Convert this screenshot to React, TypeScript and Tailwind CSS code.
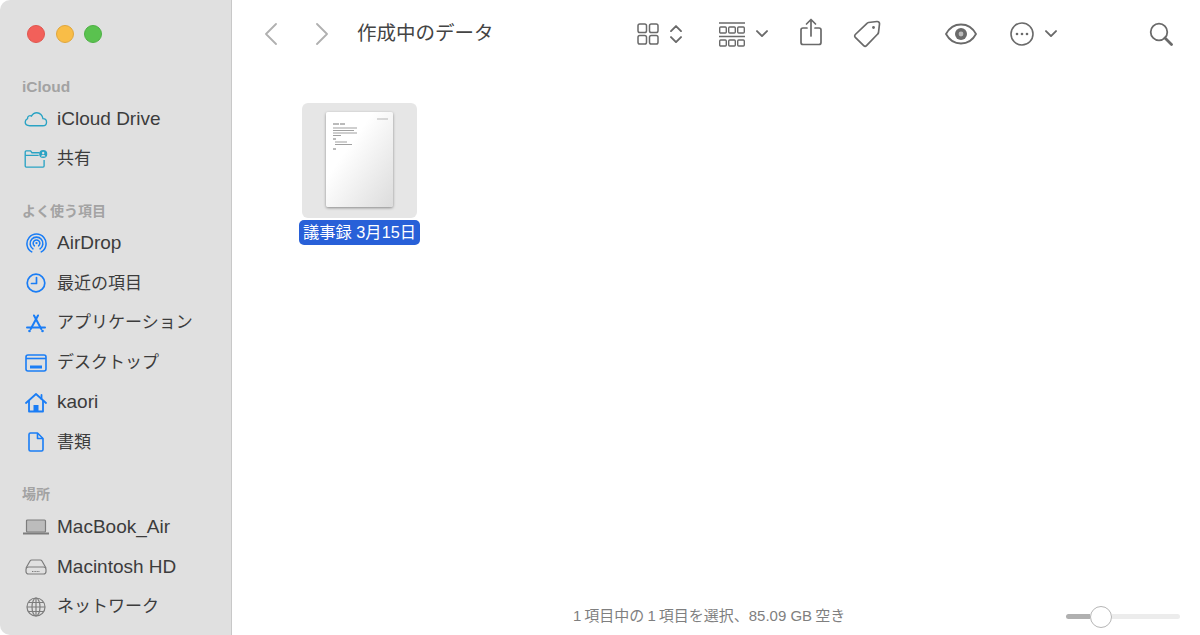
import React from 'react';

const blue = '#1a7df5';
const teal = '#2aa3c4';
const gray = '#7c7c7c';
const tool = '#6a6a6a';

type IconProps = { color?: string };

const CloudIcon = ({ color = teal }: IconProps) => (
  <svg width="24" height="18" viewBox="0 0 26 20" fill="none" stroke={color} strokeWidth="1.500">
    <path d="M6 17.500h14.500c2.600 0 4.200-1.800 4.200-4 0-2.300-1.800-3.900-4-3.900-.4-3.600-3.200-6.600-6.800-6.600-2.800 0-4.800 1.500-6 3.800-.9-.6-2-.6-2.900-.1-1 .6-1.500 1.600-1.400 2.800C1.900 10.300 1 11.800 1 13.400c0 2.300 2 4.100 5 4.100z" />
  </svg>
);

const SharedFolderIcon = ({ color = teal }: IconProps) => (
  <svg width="24" height="18" viewBox="0 0 26 20" fill="none" stroke={color} strokeWidth="1.500">
    <path d="M17 3H8.500L7 1H2.200C1.500 1 1 1.500 1 2.200v15.600c0 .7.500 1.200 1.200 1.200h18.600c.7 0 1.200-.5 1.200-1.200V11" />
    <path d="M1 6h15" />
    <circle cx="21" cy="4.500" r="4.500" fill={color} stroke="none" />
    <circle cx="21" cy="3.200" r="1.300" fill="#e0e0e0" stroke="none" />
    <path d="M18.500 7.300c.4-1.500 1.300-2 2.500-2s2.100.5 2.500 2z" fill="#e0e0e0" stroke="none" />
  </svg>
);

const AirDropIcon = ({ color = blue }: IconProps) => (
  <svg width="21" height="21" viewBox="0 0 22 22" fill="none" stroke={color} strokeWidth="1.600" strokeLinecap="round">
    <path d="M6 19.800a10 10 0 1 1 10 0" />
    <path d="M7.300 16.600a6.700 6.700 0 1 1 7.400 0" />
    <path d="M8.800 13.500a3.500 3.500 0 1 1 4.400 0" />
    <circle cx="11" cy="10.500" r="1.200" fill={color} stroke="none" />
  </svg>
);

const ClockIcon = ({ color = blue }: IconProps) => (
  <svg width="20" height="20" viewBox="0 0 20 20" fill="none" stroke={color} strokeWidth="1.700" strokeLinecap="round" strokeLinejoin="round">
    <circle cx="10" cy="10" r="8.800" />
    <path d="M10.500 4.500v6H5.500" />
  </svg>
);

const AppsIcon = ({ color = blue }: IconProps) => (
  <svg width="20" height="19" viewBox="0 0 20 19" fill="none" stroke={color} strokeWidth="2" strokeLinecap="round">
    <path d="M8 1.500 15.300 15" />
    <path d="M12 1.500 4.700 15" />
    <path d="M1 13.500h18" />
    <circle cx="3.500" cy="17" r="1.300" fill={color} stroke="none" />
    <circle cx="16.500" cy="17" r="1.300" fill={color} stroke="none" />
  </svg>
);

const DesktopIcon = ({ color = blue }: IconProps) => (
  <svg width="22" height="18" viewBox="0 0 22 18" fill="none" stroke={color} strokeWidth="1.600">
    <rect x="1" y="1" width="20" height="16" rx="2" />
    <path d="M1 4.500h20" />
    <rect x="5" y="11.500" width="12" height="3" fill={color} stroke="none" />
  </svg>
);

const HomeIcon = ({ color = blue }: IconProps) => (
  <svg width="22" height="20" viewBox="0 0 22 20" fill="none" stroke={color} strokeWidth="1.800" strokeLinecap="round" strokeLinejoin="round">
    <path d="M1 10 11 1l10 9" />
    <path d="M4 8v10.500h14V8" />
    <path d="M16.500 2v4" />
    <rect x="8.500" y="12" width="5" height="6.500" fill={color} stroke="none" />
  </svg>
);

const DocIcon = ({ color = blue }: IconProps) => (
  <svg width="16" height="20" viewBox="0 0 16 20" fill="none" stroke={color} strokeWidth="1.600" strokeLinejoin="round">
    <path d="M2.500 1H9.500L15 6.500V17.500C15 18.300 14.300 19 13.500 19H2.500C1.700 19 1 18.300 1 17.500V2.500C1 1.700 1.700 1 2.500 1Z" />
    <path d="M9.500 1V6.500H15" />
  </svg>
);

const LaptopIcon = ({ color = gray }: IconProps) => (
  <svg width="26" height="16" viewBox="0 0 26 16" fill="none">
    <rect x="3.500" y="1" width="19" height="12" rx="1" fill="#bcbcbc" stroke={color} strokeWidth="1.200" />
    <path d="M0 14.500h26" stroke={color} strokeWidth="1.800" />
  </svg>
);

const DriveIcon = ({ color = gray }: IconProps) => (
  <svg width="22" height="16" viewBox="0 0 22 16" fill="none" stroke={color} strokeWidth="1.200" strokeLinejoin="round">
    <path d="M1 9 5 2c.4-.7 1-1 1.800-1h8.400c.8 0 1.400.3 1.800 1l4 7" />
    <rect x="1" y="8" width="20" height="7" rx="2.500" />
    <path d="M7 12.500h8" strokeDasharray="1 .6" />
  </svg>
);

const GlobeIcon = ({ color = gray }: IconProps) => (
  <svg width="20" height="20" viewBox="0 0 20 20" fill="none" stroke={color} strokeWidth="1.200">
    <circle cx="10" cy="10" r="9" />
    <ellipse cx="10" cy="10" rx="4" ry="9" />
    <path d="M10 1v18M1 10h18M2.500 5.500h15M2.500 14.500h15" />
  </svg>
);

const Chevron = ({ dir, color = tool, size = 12 }: { dir: 'up' | 'down'; color?: string; size?: number }) => (
  <svg width={size} height={size * 0.6} viewBox="0 0 12 7" fill="none" stroke={color} strokeWidth="1.900" strokeLinecap="round" strokeLinejoin="round">
    <path d={dir === 'down' ? 'M1 1l5 5 5-5' : 'M1 6l5-5 5 5'} />
  </svg>
);

const NavChevron = ({ flip }: { flip?: boolean }) => (
  <svg width="14" height="22" viewBox="0 0 14 22" fill="none" stroke="#b0b0b0" strokeWidth="1.800" strokeLinecap="round" strokeLinejoin="round">
    <path d={flip ? 'M2 1l10 10L2 21' : 'M12 1 2 11l10 10'} />
  </svg>
);

const GridIcon = () => (
  <svg width="22" height="22" viewBox="0 0 22 22" fill="none" stroke={tool} strokeWidth="1.500">
    <rect x="1" y="1" width="8.500" height="8.500" rx="1.800" />
    <rect x="12.500" y="1" width="8.500" height="8.500" rx="1.800" />
    <rect x="1" y="12.500" width="8.500" height="8.500" rx="1.800" />
    <rect x="12.500" y="12.500" width="8.500" height="8.500" rx="1.800" />
  </svg>
);

const GroupIcon = () => (
  <svg width="26" height="25" viewBox="0 0 26 25" fill="none" stroke={tool} strokeWidth="1.400">
    <path d="M0 1h26M0 14.500h26" strokeWidth="1.700" />
    <rect x=".7" y="5" width="6.600" height="6" rx="1" />
    <rect x="9.700" y="5" width="6.600" height="6" rx="1" />
    <rect x="18.700" y="5" width="6.600" height="6" rx="1" />
    <rect x=".7" y="18" width="6.600" height="6" rx="1" />
    <rect x="9.700" y="18" width="6.600" height="6" rx="1" />
    <rect x="18.700" y="18" width="6.600" height="6" rx="1" />
  </svg>
);

const ShareIcon = () => (
  <svg width="22" height="28" viewBox="0 0 22 28" fill="none" stroke={tool} strokeWidth="1.700" strokeLinecap="round" strokeLinejoin="round">
    <path d="M7 10H3c-1.100 0-2 .9-2 2v12.500c0 1.100.9 2 2 2h16c1.100 0 2-.9 2-2V12c0-1.100-.9-2-2-2h-4" />
    <path d="M11 18V1.500M6.500 6 11 1.500 15.500 6" />
  </svg>
);

const TagIcon = () => (
  <svg width="28" height="28" viewBox="0 0 28 28" fill="none" stroke={tool} strokeWidth="1.700" strokeLinejoin="round">
    <path d="M15.500 2.500 24 1.500c1.500-.1 2.600 1 2.500 2.500l-1 8.500c-.1.600-.3 1.100-.8 1.500L13.500 25.700c-.8.800-2 .8-2.800 0L2.300 17.300c-.8-.8-.8-2 0-2.800L14 3.300c.4-.5.900-.7 1.500-.8z" />
    <circle cx="20.500" cy="7.500" r="1.400" fill={tool} stroke="none" />
  </svg>
);

const EyeIcon = () => (
  <svg width="32" height="22" viewBox="0 0 32 22" fill="none" stroke={tool} strokeWidth="1.800">
    <path d="M1 11C4.500 4.500 10 1.500 16 1.500S27.500 4.500 31 11c-3.500 6.500-9 9.500-15 9.500S4.500 17.500 1 11z" />
    <circle cx="16" cy="11" r="6" fill={tool} stroke="none" />
    <circle cx="16" cy="11" r="2.400" fill="#bbb" stroke="none" />
  </svg>
);

const MoreIcon = () => (
  <svg width="24" height="24" viewBox="0 0 24 24" fill="none" stroke={tool} strokeWidth="1.600">
    <circle cx="12" cy="12" r="11" />
    <circle cx="7" cy="12" r="1.300" fill={tool} stroke="none" />
    <circle cx="12" cy="12" r="1.300" fill={tool} stroke="none" />
    <circle cx="17" cy="12" r="1.300" fill={tool} stroke="none" />
  </svg>
);

const SearchIcon = () => (
  <svg width="24" height="24" viewBox="0 0 24 24" fill="none" stroke={tool} strokeLinecap="round">
    <circle cx="10" cy="10" r="8.300" strokeWidth="1.800" />
    <path d="M16 16l6.500 6.500" strokeWidth="2.800" />
  </svg>
);

// latin labels sit a bit larger than the kana/kanji ones in the reference
const latin = 'text-[19px]';
const cjk = 'text-[17px]';

const sections = [
  {
    title: 'iCloud',
    className: 'mt-[32px] h-6 text-[15.500px]',
    items: [
      { label: 'iCloud Drive', size: latin, icon: <CloudIcon /> },
      { label: '共有', size: cjk, icon: <SharedFolderIcon /> },
    ],
  },
  {
    title: 'よく使う項目',
    className: 'mt-5 h-[25px] text-[14px]',
    items: [
      { label: 'AirDrop', size: latin, icon: <AirDropIcon /> },
      { label: '最近の項目', size: cjk, icon: <ClockIcon /> },
      { label: 'アプリケーション', size: cjk, icon: <AppsIcon /> },
      { label: 'デスクトップ', size: cjk, icon: <DesktopIcon /> },
      { label: 'kaori', size: latin, icon: <HomeIcon /> },
      { label: '書類', size: cjk, icon: <DocIcon /> },
    ],
  },
  {
    title: '場所',
    className: 'mt-[20px] h-[25px] text-[14px]',
    items: [
      { label: 'MacBook_Air', size: latin, icon: <LaptopIcon /> },
      { label: 'Macintosh HD', size: latin, icon: <DriveIcon /> },
      { label: 'ネットワーク', size: cjk, icon: <GlobeIcon /> },
    ],
  },
];

const DocThumb = () => (
  <div className="flex h-[115px] w-[115px] justify-center rounded-[6px] bg-[#e6e6e6] pt-[9px]">
    <div className="h-[95px] w-[67px] rounded-[2px] bg-gradient-to-br from-white from-35% to-[#dcdcdc] shadow-[0_1px_3px_rgba(0,0,0,0.4)]">
      <svg width="67" height="60" viewBox="0 0 67 60" fill="none" stroke="#777" strokeWidth="0.700">
        <path d="M7 12h6M14 12h5" strokeWidth="1" />
        <path d="M51 7h11" stroke="#999" />
        <path d="M7 16h24M7 18.500h21M7 21h24M7 23.500h8" />
        <path d="M7 27h3" strokeWidth="1" />
        <path d="M9 30h12M9 32.500h17" />
        <path d="M7 37h3" strokeWidth="1" />
      </svg>
    </div>
  </div>
);

export default function App() {
  return (
    <div className="flex h-[635px] w-[1200px] overflow-hidden rounded-[10px] bg-white font-['Liberation_Sans','Noto_Sans_CJK_JP',sans-serif]">
      <aside className="h-full w-[232px] shrink-0 border-r border-[#c8c8c8] bg-[#e0e0e0]">
        <div className="flex gap-[10.500px] pl-[27px] pt-[25px]">
          <span className="h-[18px] w-[18px] rounded-full border border-[#e0564f] bg-[#f2605a]" />
          <span className="h-[18px] w-[18px] rounded-full border border-[#e0a63c] bg-[#f9bd47]" />
          <span className="h-[18px] w-[18px] rounded-full border border-[#4db044] bg-[#5ac24f]" />
        </div>
        {sections.map(section => (
          <div key={section.title}>
            <div className={`${section.className} flex items-center pl-[22px] font-bold text-[#a3a3a3]`}>{section.title}</div>
            {section.items.map(item => (
              <div key={item.label} className={`${item.size} flex h-[39.800px] items-center text-[#3c3c3c]`}>
                <span className="flex w-[57px] shrink-0 justify-center pl-[15px]">{item.icon}</span>
                <span className="whitespace-nowrap">{item.label}</span>
              </div>
            ))}
          </div>
        ))}
      </aside>
      <main className="flex min-w-0 flex-1 flex-col">
        <header className="flex h-[68px] items-center pl-[32px] text-[#6a6a6a]">
          <NavChevron />
          <span className="ml-[37px]"><NavChevron flip /></span>
          <h1 className="ml-[28px] w-[280px] whitespace-nowrap text-[19.500px] font-normal text-[#444]">作成中のデータ</h1>
          <GridIcon />
          <span className="ml-[11px] flex flex-col gap-[4px]"><Chevron dir="up" /><Chevron dir="down" /></span>
          <span className="ml-[37px]"><GroupIcon /></span>
          <span className="ml-[11px]"><Chevron dir="down" /></span>
          <span className="ml-[32px] -mt-[5px]"><ShareIcon /></span>
          <span className="ml-[31px]"><TagIcon /></span>
          <span className="ml-[64px]"><EyeIcon /></span>
          <span className="ml-[33px]"><MoreIcon /></span>
          <span className="ml-[11px]"><Chevron dir="down" /></span>
          <span className="ml-[92px]"><SearchIcon /></span>
        </header>
        <section className="flex-1 pl-[67px] pt-[35px]">
          <div className="flex w-[121px] flex-col items-center">
            <DocThumb />
            <div className="mt-[2px] flex h-[25px] w-[121px] items-center justify-center whitespace-nowrap rounded-[5px] bg-[#2860d8] text-[16.300px] text-white">議事録 3月15日</div>
          </div>
        </section>
        <footer className="flex h-[36px] items-center pb-[1px] pl-[341px]">
          <span className="w-[493px] whitespace-nowrap text-[15px] text-[#7f7f7f]">1{'\u2009'}項目中の{'\u2009'}1{'\u2009'}項目を選択、85.09 GB{'\u2009'}空き</span>
          <div className="flex w-[114px] items-center">
            <div className="h-[5px] w-[24px] rounded-l-full bg-[#b0b0b0]" />
            <div className="z-10 h-[22px] w-[22px] shrink-0 rounded-full border border-[#b5b5b5] bg-white" />
            <div className="h-[5px] flex-1 rounded-r-full bg-[#ececec]" />
          </div>
        </footer>
      </main>
    </div>
  );
}
